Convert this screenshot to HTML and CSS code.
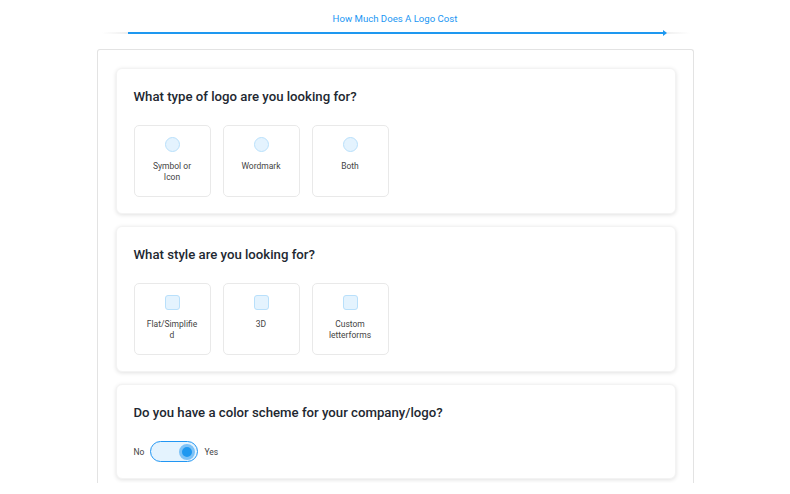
FILE: index.html
```html
<!DOCTYPE html>
<html>
<head>
<meta charset="utf-8">
<link rel="stylesheet" href="styles.css">
</head>
<body>
<header class="top">
  <div class="top-title">How Much Does A Logo Cost</div>
  <div class="progress">
    <div class="progress-bar"><span class="arrow"></span></div>
  </div>
</header>
<main class="frame">
  <section class="card">
    <h2 class="question">What type of logo are you looking for?</h2>
    <div class="options">
      <div class="option"><span class="mark round"></span><span class="label">Symbol or Icon</span></div>
      <div class="option"><span class="mark round"></span><span class="label">Wordmark</span></div>
      <div class="option"><span class="mark round"></span><span class="label">Both</span></div>
    </div>
  </section>
  <section class="card">
    <h2 class="question">What style are you looking for?</h2>
    <div class="options">
      <div class="option"><span class="mark square"></span><span class="label">Flat/Simplified</span></div>
      <div class="option"><span class="mark square"></span><span class="label">3D</span></div>
      <div class="option"><span class="mark square"></span><span class="label">Custom letterforms</span></div>
    </div>
  </section>
  <section class="card card-short">
    <h2 class="question">Do you have a color scheme for your company/logo?</h2>
    <div class="switch-row">
      <span class="switch-text">No</span>
      <span class="switch"><span class="knob"></span></span>
      <span class="switch-text">Yes</span>
    </div>
  </section>
</main>
</body>
</html>
```

FILE: styles.css
```css
html, body {
  margin: 0;
  padding: 0;
  background: #ffffff;
  font-family: Roboto, "Liberation Sans", Arial, sans-serif;
  overflow: hidden;
}

.top {
  padding-top: 12px;
  display: flex;
  flex-direction: column;
  align-items: center;
}

.top-title {
  font-size: 9.6px;
  line-height: 13px;
  color: #2196f3;
}

.progress {
  margin-top: 7px;
  width: 588px;
  height: 2px;
  margin-left: 2px;
  background: linear-gradient(to right, rgba(235,235,235,0) 0%, #e8e8e8 6%, #e8e8e8 94%, rgba(235,235,235,0) 100%);
  display: flex;
  justify-content: center;
}

.progress-bar {
  width: 536px;
  height: 2px;
  background: #1e98f0;
  position: relative;
}

.arrow {
  position: absolute;
  right: -3px;
  top: -2px;
  width: 0;
  height: 0;
  border-top: 3px solid transparent;
  border-bottom: 3px solid transparent;
  border-left: 4px solid #1e98f0;
}

.frame {
  box-sizing: border-box;
  width: 597px;
  height: 434px;
  margin: 15px auto 0;
  border: 1px solid #e3e3e3;
  border-bottom: none;
  border-radius: 3px 3px 0 0;
  padding: 18px 17px 0 18px;
  display: flex;
  flex-direction: column;
  gap: 12px;
  overflow: hidden;
}

.card {
  box-sizing: border-box;
  width: 560px;
  height: 146px;
  flex: none;
  background: #fff;
  border: 1px solid #f3f3f3;
  border-radius: 6px;
  box-shadow: 0 1px 4px rgba(0,0,0,0.12);
  padding: 19px 17px 0 17px;
}

.card-short {
  height: 95px;
}

.question {
  margin: 0;
  font-size: 13.2px;
  line-height: 18px;
  font-weight: 500;
  color: #222831;
}

.options {
  margin-top: 19px;
  display: flex;
  gap: 12px;
}

.option {
  box-sizing: border-box;
  width: 77px;
  height: 72px;
  border: 1px solid #e9e9e9;
  border-radius: 5px;
  display: flex;
  flex-direction: column;
  align-items: center;
  padding: 11px 11px 0;
}

.mark {
  box-sizing: border-box;
  width: 15px;
  height: 15px;
  background: #e4f3fe;
  border: 1.5px solid #b9e0fb;
  flex: none;
}

.round { border-radius: 50%; }
.square { border-radius: 3px; }

.label {
  margin-top: 9px;
  width: 100%;
  text-align: center;
  font-size: 8.5px;
  line-height: 11px;
  color: #444;
  overflow-wrap: anywhere;
}

.switch-row {
  margin-top: 19px;
  display: flex;
  align-items: center;
  gap: 6px;
}

.switch-text {
  font-size: 8.5px;
  color: #444;
}

.switch {
  box-sizing: border-box;
  width: 48px;
  height: 21px;
  border: 1.5px solid #2196f3;
  border-radius: 11px;
  background: #e4f3fe;
  display: flex;
  align-items: center;
  justify-content: flex-end;
  padding-right: 2px;
}

.knob {
  box-sizing: border-box;
  width: 16px;
  height: 16px;
  border-radius: 50%;
  background: #1e98f0;
  border: 3px solid #7cc2f7;
}
```
